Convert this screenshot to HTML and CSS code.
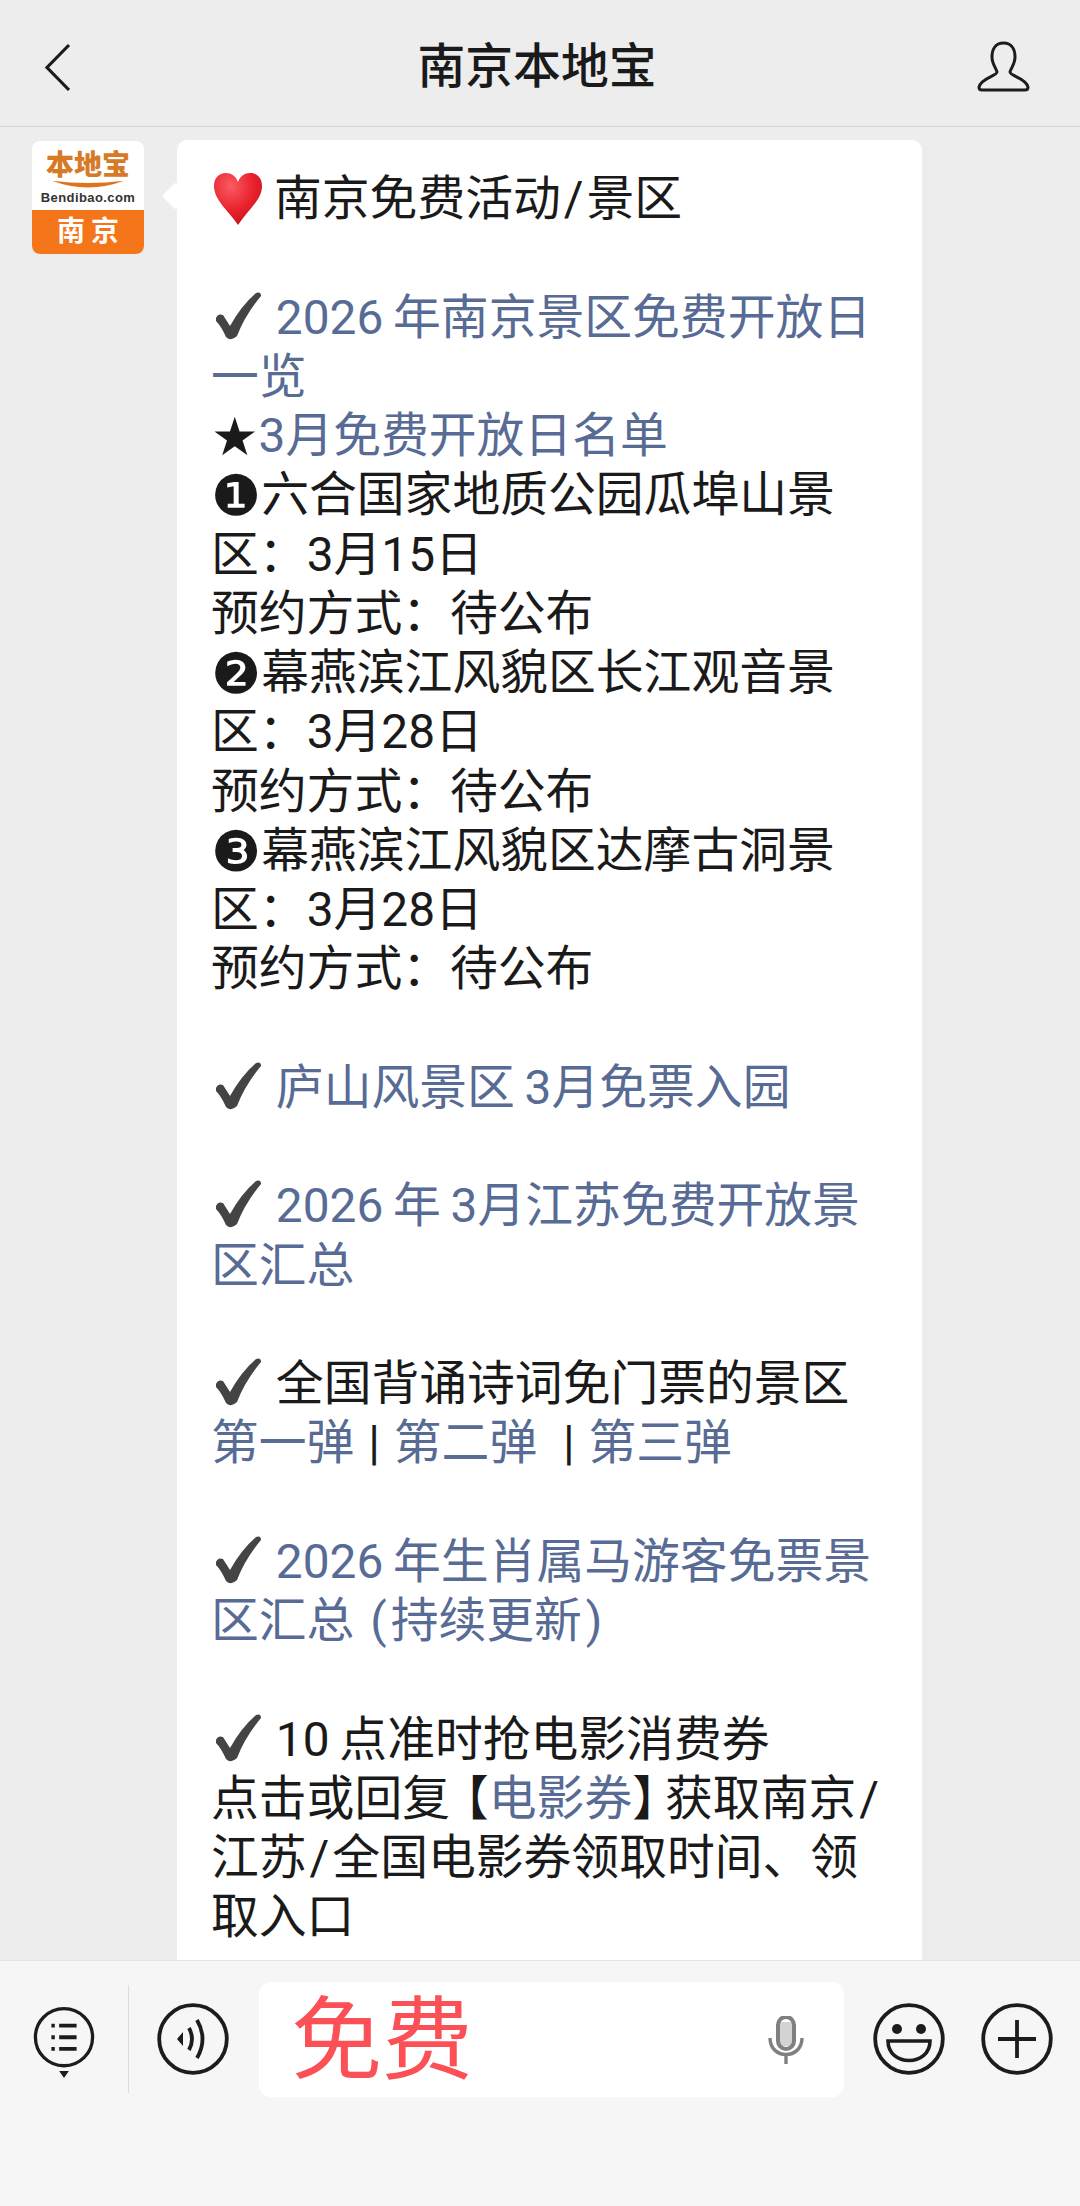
FILE: index.html
```html
<!DOCTYPE html>
<html lang="zh-CN">
<head>
    <meta charset="UTF-8">
    <meta name="viewport" content="width=device-width, initial-scale=1.0">
    <title>南京本地宝</title>
    <link rel="stylesheet" href="styles.css">
</head>
<body>
    <svg class="icon-defs" width="0" height="0">
        <symbol id="check" viewBox="3 0 48 50">
            <path d="M5 27 Q7 22 12 24 L19 35 Q30 15 45 2 Q50 0 50 5 Q34 24 26 45 Q20 51 15 46 Q10 35 5 30 Z" fill="#444"/>
        </symbol>
        <radialGradient id="heartFill" cx="35%" cy="25%" r="85%">
            <stop offset="0" stop-color="#fb5a62"/>
            <stop offset=".55" stop-color="#e8232e"/>
            <stop offset="1" stop-color="#c40f1e"/>
        </radialGradient>
    </svg>

    <div class="page">
        <header class="topbar">
            <div class="topbar-side">
                <svg class="back-icon" viewBox="0 0 27 49"><path d="M25 2 L3 24.5 L25 47" fill="none" stroke="#1c1c1c" stroke-width="3.2"/></svg>
            </div>
            <h1 class="title">南京本地宝</h1>
            <div class="topbar-side topbar-right">
                <svg class="user-icon" viewBox="0 0 53 51"><path d="M26.5 2 C18 2 15 9 15 16 C15 23 19 27 20 31 C20 35 4 37 2 46 C2 48 3 49 5 49 L48 49 C50 49 51 48 51 46 C49 37 33 35 33 31 C34 27 38 23 38 16 C38 9 35 2 26.5 2 Z" fill="none" stroke="#1c1c1c" stroke-width="3"/></svg>
            </div>
        </header>

        <main class="chat">
            <div class="avatar">
                <div class="avatar-top">
                    <span class="avatar-brand">本地宝</span>
                    <svg class="avatar-smile" viewBox="0 0 112 14"><path d="M0 1 Q56 8 112 1 Q56 22 0 1 Z" fill="#e0741c"/></svg>
                    <span class="avatar-site">Bendibao.com</span>
                </div>
                <div class="avatar-city">南京</div>
            </div>

            <div class="bubble">
                <p class="para"><svg class="heart" viewBox="0 0 54 54"><path d="M27 53 C17 38 3 28 3 14 C3 6 8 1 15 1 C20 1 25 4 27 10 C29 4 34 1 39 1 C46 1 51 6 51 14 C51 28 37 38 27 53 Z" fill="url(#heartFill)"/></svg>南京免费活动<span class="slash">/</span>景区</p>

                <p class="para"><svg class="check"><use href="#check"/></svg> <span class="link">2026&thinsp;年南京景区免费开放日一览</span><br>
                <span class="glyph star">★</span><span class="link">3月免费开放日名单</span><br>
                <span class="glyph">❶</span>六合国家地质公园瓜埠山景区<span class="colon">：</span>3月15日<br>
                预约方式<span class="colon">：</span>待公布<br>
                <span class="glyph">❷</span>幕燕滨江风貌区长江观音景区<span class="colon">：</span>3月28日<br>
                预约方式<span class="colon">：</span>待公布<br>
                <span class="glyph">❸</span>幕燕滨江风貌区达摩古洞景区<span class="colon">：</span>3月28日<br>
                预约方式<span class="colon">：</span>待公布</p>

                <p class="para"><svg class="check"><use href="#check"/></svg> <span class="link">庐山风景区&thinsp;3月免票入园</span></p>

                <p class="para"><svg class="check"><use href="#check"/></svg> <span class="link">2026&thinsp;年&thinsp;3月江苏免费开放景区汇总</span></p>

                <p class="para"><svg class="check"><use href="#check"/></svg> 全国背诵诗词免门票的景区<br>
                <span class="link">第一弹</span><span class="sep"> | </span><span class="link">第二弹</span><span class="sep"> &nbsp;| </span><span class="link">第三弹</span></p>

                <p class="para"><svg class="check"><use href="#check"/></svg> <span class="link">2026&thinsp;年生肖属马游客免票景区汇总 <span class="paren">(</span>持续更新<span class="paren">)</span></span></p>

                <p class="para"><svg class="check"><use href="#check"/></svg> 10&thinsp;点准时抢电影消费券<br>
                点击或回复<span class="br-left">【</span><span class="link">电影券</span><span class="br-right">】</span>获取南京<span class="slash">/</span>江苏<span class="slash">/</span>全国电影券领取时间、领取入口</p>
            </div>
        </main>

        <footer class="inputbar">
            <div class="menu-btn">
                <svg class="menu-icon" viewBox="0 0 64 74">
                    <circle cx="32" cy="31" r="29.5" fill="none" stroke="#1c1c1c" stroke-width="3.4"/>
                    <path d="M19 19h3.5M27 19h18M19 31h3.5M27 31h18M19 43h3.5M27 43h18" stroke="#1c1c1c" stroke-width="4"/>
                    <path d="M27 66h10l-5 7z" fill="#1c1c1c"/>
                </svg>
            </div>
            <svg class="round-icon" viewBox="0 0 72 72">
                <circle cx="36" cy="36" r="33.8" fill="none" stroke="#1c1c1c" stroke-width="3.8"/>
                <path d="M20 36l6-7v14z" fill="#1c1c1c"/>
                <path d="M32 25q6 11 0 22M40 17q11 19 0 38" fill="none" stroke="#1c1c1c" stroke-width="3.8"/>
            </svg>
            <div class="input">
                <span class="input-text">免费</span>
                <svg class="mic-icon" viewBox="0 0 36 48">
                    <rect x="10" y="1" width="16" height="32" rx="8" fill="none" stroke="#808080" stroke-width="4"/>
                    <path d="M12 6h12v24h-12z" fill="#808080" opacity=".35"/>
                    <path d="M2 22c0 22 32 22 32 0M18 38v10" fill="none" stroke="#808080" stroke-width="3.4"/>
                </svg>
            </div>
            <svg class="round-icon emoji-icon" viewBox="0 0 72 72">
                <circle cx="36" cy="36" r="33.8" fill="none" stroke="#1c1c1c" stroke-width="3.8"/>
                <circle cx="24" cy="26" r="5" fill="#1c1c1c"/>
                <circle cx="48" cy="26" r="5" fill="#1c1c1c"/>
                <path d="M15 38h42c0 26-42 26-42 0z" fill="none" stroke="#1c1c1c" stroke-width="3.6"/>
            </svg>
            <svg class="round-icon plus-icon" viewBox="0 0 72 72">
                <circle cx="36" cy="36" r="33.8" fill="none" stroke="#1c1c1c" stroke-width="3.8"/>
                <path d="M17 36h38M36 17v38" stroke="#1c1c1c" stroke-width="3.8"/>
            </svg>
        </footer>
    </div>
</body>
</html>
```

FILE: styles.css
```css
html, body {
    margin: 0;
    padding: 0;
}
body {
    font-family: Roboto, "Noto Sans CJK SC", sans-serif;
    background-color: #ededed;
    color: #1a1a1a;
}
.icon-defs {
    display: block;
}
.page {
    display: flex;
    flex-direction: column;
    height: 2206px;
    overflow: hidden;
}
.topbar {
    flex: none;
    height: 127px;
    box-sizing: border-box;
    display: flex;
    align-items: center;
    padding: 8px 50px 0 44px;
    background: #ededed;
    border-bottom: 1px solid #d5d5d5;
}
.topbar-side {
    flex: 1;
    display: flex;
}
.topbar-right {
    justify-content: flex-end;
}
.back-icon {
    width: 27px;
    height: 49px;
}
.title {
    margin: 0;
    font-size: 47.8px;
    font-weight: 500;
    line-height: 60px;
}
.user-icon {
    width: 53px;
    height: 51px;
    margin-top: -2px;
}
.chat {
    flex: 1;
    min-height: 0;
    overflow: hidden;
    display: flex;
    align-items: flex-start;
    gap: 33px;
    padding: 13px 0 0 32px;
}
.avatar {
    flex: none;
    width: 112px;
    height: 113px;
    margin-top: 1px;
    border-radius: 8px;
    overflow: hidden;
    background: white;
    display: flex;
    flex-direction: column;
}
.avatar-top {
    height: 69px;
    display: flex;
    flex-direction: column;
    align-items: center;
    padding-top: 10px;
    box-sizing: border-box;
}
.avatar-brand {
    font-size: 28px;
    line-height: 30px;
    font-weight: 900;
    color: #d67a26;
}
.avatar-smile {
    display: block;
    width: 112px;
    height: 9px;
    margin-top: -1px;
}
.avatar-site {
    margin-top: 1px;
    font-family: "Liberation Sans", sans-serif;
    font-size: 13px;
    line-height: 15px;
    font-weight: 700;
    letter-spacing: .4px;
    color: #333;
}
.avatar-city {
    flex: 1;
    background: #f5761a;
    color: white;
    font-size: 28px;
    line-height: 44px;
    font-weight: 700;
    letter-spacing: 6px;
    text-indent: 6px;
    text-align: center;
}
.bubble {
    position: relative;
    flex: none;
    width: 745px;
    box-sizing: border-box;
    padding: 30px 22px 30px 34px;
    background: white;
    border-radius: 10px;
    font-size: 47.8px;
    line-height: 59.25px;
}
.bubble::before {
    content: "";
    position: absolute;
    left: -11px;
    top: 46px;
    width: 20px;
    height: 20px;
    background: white;
    border-radius: 3px;
    transform: rotate(45deg);
}
.para {
    margin: 0 0 59.25px;
}
.link {
    color: #576b95;
}
.slash {
    padding: 0 3px;
}
.paren {
    padding: 0 4px;
}
.colon {
    font-family: "Noto Sans CJK TC", sans-serif;
    line-height: 0;
}
.sep {
    margin: 0 2px;
}
.br-left {
    margin-left: -9px;
}
.br-right {
    margin-right: -15px;
}
.heart {
    width: 54px;
    height: 54px;
    margin-right: 9px;
    vertical-align: -11px;
}
.check {
    width: 52px;
    height: 50px;
    margin-left: 1px;
    vertical-align: -7px;
}
.glyph {
    font-family: "DejaVu Sans", sans-serif;
    font-size: 56px;
    line-height: 0;
    vertical-align: -4px;
}
.star {
    font-size: 53px;
    vertical-align: -3px;
}
.inputbar {
    flex: none;
    height: 246px;
    box-sizing: border-box;
    display: flex;
    align-items: flex-start;
    padding: 21px 0 0 33px;
    background: #f6f6f6;
    border-top: 1px solid #e4e4e4;
}
.menu-btn {
    display: flex;
    width: 96px;
    height: 108px;
    margin-top: 3px;
    padding-top: 21px;
    box-sizing: border-box;
    border-right: 1px solid #dcdcdc;
}
.menu-icon {
    width: 62px;
    height: 74px;
}
.round-icon {
    flex: none;
    width: 72px;
    height: 72px;
    margin: 21px 30px 0 28px;
}
.input {
    flex: none;
    width: 585px;
    height: 115px;
    box-sizing: border-box;
    padding: 0 40px 0 32px;
    display: flex;
    align-items: center;
    justify-content: space-between;
    background: white;
    border-radius: 12px;
    color: #fb5156;
}
.input-text {
    font-size: 91px;
    line-height: 115px;
    padding-top: 3px;
}
.mic-icon {
    width: 36px;
    height: 48px;
}
.emoji-icon {
    margin-left: 29px;
}
.plus-icon {
    margin: 21px 0 0 6px;
}
```
